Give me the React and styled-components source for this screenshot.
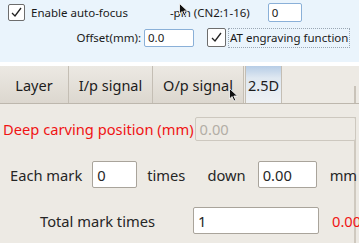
import React from 'react';
import styled, { createGlobalStyle } from 'styled-components';

const GlobalStyle = createGlobalStyle`
  body {
    margin: 0;
    background: #edeae4;
    font-family: "Noto Sans", "Open Sans", sans-serif;
  }
`;

const Page = styled.div`
  position: relative;
  width: 359px;
  height: 243px;
  overflow: hidden;
  background: #edeae4;
`;

const TopBar = styled.div`
  height: 66px;
  background: #eaf4fc;
  border-bottom: 4px solid #ffffff;
  box-sizing: border-box;
  padding-top: 3px;
  font-size: 11.5px;
  color: #1a1a1a;
`;

const TopRow = styled.div`
  display: flex;
  align-items: center;
  height: ${(p) => p.h}px;
  padding-left: ${(p) => p.pl || 0}px;
  margin-top: ${(p) => p.mt || 0}px;
`;

const CheckBox = styled.span`
  display: inline-flex;
  align-items: center;
  justify-content: center;
  width: ${(p) => p.size}px;
  height: ${(p) => p.size}px;
  margin-left: ${(p) => p.ml || 0}px;
  box-sizing: border-box;
  border: 1px solid #6d6d6d;
  border-radius: 2px;
  background: #fff;
  flex: none;
`;

const TopText = styled.span`
  margin-left: ${(p) => p.ml || 0}px;
  width: ${(p) => (p.w ? `${p.w}px` : 'auto')};
  text-align: ${(p) => p.align || 'left'};
  white-space: nowrap;
  flex: none;
`;

const FocusLabel = styled.span`
  margin-left: 2px;
  padding: 0 1px;
  height: 18px;
  line-height: 17px;
  border: 1px dotted #9aa7b4;
  white-space: nowrap;
`;

const SmallInput = styled.span`
  display: inline-flex;
  align-items: center;
  box-sizing: border-box;
  width: ${(p) => p.w}px;
  height: ${(p) => p.h}px;
  margin-left: ${(p) => p.ml || 0}px;
  padding-left: 3px;
  border: 1px solid #8ab0d8;
  border-radius: 2px;
  background: #fff;
  flex: none;
`;

const TabBar = styled.div`
  display: flex;
  height: 37px;
  border-bottom: 1px solid #bdb7ad;
  font-size: 14.5px;
  color: #1c1c1c;
`;

const Tab = styled.div`
  display: flex;
  align-items: center;
  justify-content: center;
  width: ${(p) => p.w}px;
  box-sizing: border-box;
  border-right: 1px solid #c4beb4;
  background: ${(p) =>
    p.active
      ? 'linear-gradient(#b7cde6 0px, #dfe8f1 12px, #eef1f4 100%)'
      : 'linear-gradient(#ece9e3, #dcd7cf)'};
  border-left: ${(p) => (p.active ? '1px solid #c4beb4' : 'none')};
  margin-left: ${(p) => (p.active ? 1 : 0)}px;
  flex: none;
`;

const TabFill = styled.div`
  flex: 1;
  display: flex;
  justify-content: flex-end;
  align-items: flex-end;
`;

const TabEdge = styled.div`
  width: 2px;
  height: 17px;
  margin-right: 3px;
  background: #c9c3b9;
`;

const Content = styled.div`
  height: 139px;
  margin-right: 3px;
  border-right: 2px solid #cfc9bf;
  font-size: 14.7px;
  color: #262626;
`;

const Row = styled.div`
  display: flex;
  align-items: center;
  height: ${(p) => p.h}px;
  margin-top: ${(p) => p.mt || 0}px;
  padding-left: ${(p) => p.pl || 0}px;
`;

const Label = styled.span`
  width: ${(p) => (p.w ? `${p.w}px` : 'auto')};
  margin-left: ${(p) => p.ml || 0}px;
  color: ${(p) => (p.red ? '#f01414' : '#262626')};
  white-space: nowrap;
  flex: none;
`;

const Field = styled.span`
  display: inline-flex;
  align-items: center;
  box-sizing: border-box;
  width: ${(p) => p.w}px;
  height: ${(p) => p.h}px;
  margin-left: ${(p) => p.ml || 0}px;
  padding-left: 4px;
  border: 1px solid ${(p) => (p.disabled ? '#cdc8bf' : '#a9a49b')};
  border-radius: 2px;
  background: ${(p) => (p.disabled ? '#edeae4' : '#ffffff')};
  color: ${(p) => (p.disabled ? '#b3aea6' : '#262626')};
  flex: none;
`;

const Cursor = styled.svg`
  position: absolute;
  left: ${(p) => p.x}px;
  top: ${(p) => p.y}px;
`;

const Check = () => (
  <svg width="13" height="13" viewBox="0 0 13 13">
    <path d="M2 7 L5 10 L11 2" fill="none" stroke="#222" strokeWidth="1.3" />
  </svg>
);

const Arrow = ({ x, y }) => (
  <Cursor x={x} y={y} width="10" height="14" viewBox="0 0 10 14">
    <path d="M0.5 0.5 L0.5 11 L3 8.5 L5 13 L6.8 12.2 L4.8 8 L8.5 8 Z" fill="#111" stroke="#fff" strokeWidth="0.8" />
  </Cursor>
);

export default function App() {
  return (
    <Page>
      <GlobalStyle />
      <TopBar>
        <TopRow h={19} pl={8}>
          <CheckBox size={17}>
            <Check />
          </CheckBox>
          <TopText ml={6}>Enable auto-focus</TopText>
          <TopText ml={42}>-pin (CN2:1-16)</TopText>
          <SmallInput w={34} h={19} ml={18}>0</SmallInput>
        </TopRow>
        <TopRow h={19} mt={6}>
          <TopText w={141} align="right">Offset(mm):</TopText>
          <SmallInput w={50} h={18} ml={3}>0.0</SmallInput>
          <CheckBox size={19} ml={13}>
            <Check />
          </CheckBox>
          <FocusLabel>AT engraving function</FocusLabel>
        </TopRow>
      </TopBar>
      <TabBar>
        <Tab w={69}>Layer</Tab>
        <Tab w={84}>I/p signal</Tab>
        <Tab w={91}>O/p signal</Tab>
        <Tab w={37} active>2.5D</Tab>
        <TabFill>
          <TabEdge />
        </TabFill>
      </TabBar>
      <Content>
        <Row h={24} mt={13} pl={3}>
          <Label red>Deep carving position (mm)</Label>
          <Field w={161} h={24} ml={1} disabled>0.00</Field>
        </Row>
        <Row h={27} mt={20} pl={10}>
          <Label>Each mark</Label>
          <Field w={45} h={27} ml={10}>0</Field>
          <Label ml={10}>times</Label>
          <Label ml={22}>down</Label>
          <Field w={59} h={27} ml={12}>0.00</Field>
          <Label ml={13}>mm</Label>
        </Row>
        <Row h={27} mt={19} pl={40}>
          <Label w={153}>Total mark times</Label>
          <Field w={126} h={27}>1</Field>
          <Label ml={13} red>0.00</Label>
        </Row>
      </Content>
      <Arrow x={179} y={3} />
      <Arrow x={229} y={88} />
    </Page>
  );
}
